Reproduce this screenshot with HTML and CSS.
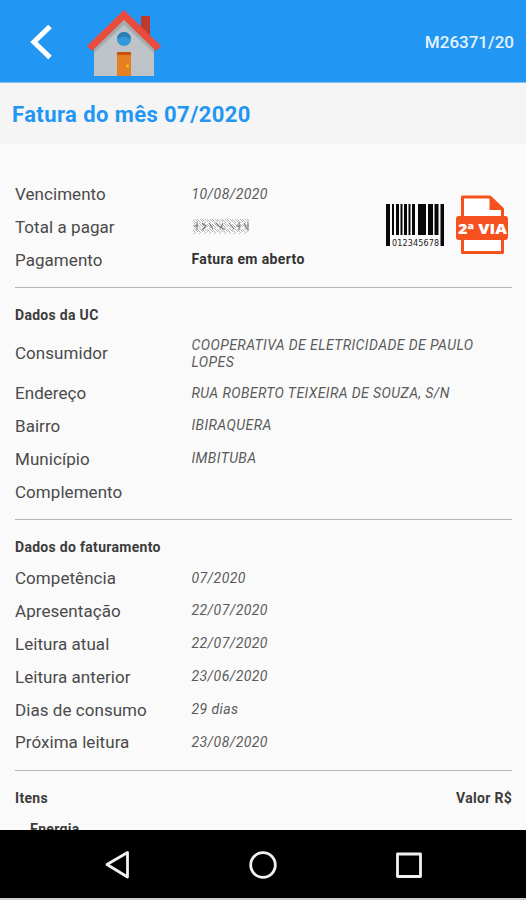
FILE: index.html
```html
<!DOCTYPE html>
<html lang="pt-BR">
<head>
<meta charset="utf-8">
<title>Fatura</title>
<link rel="stylesheet" href="styles.css">
</head>
<body>
<div class="app">
  <header class="topbar">
    <svg class="back" width="24" height="38" viewBox="0 0 24 38"><path d="M22 3.500L6 19L22 34.500" fill="none" stroke="#fff" stroke-width="5.200"/></svg>
    <svg class="house" width="76" height="70" viewBox="0 0 76 70">
      <path d="M55 8h9v26l-9-7z" fill="#c0392b"/>
      <path d="M38 10L68 38V68H8V38z" fill="#bdc3c7"/>
      <path d="M38 12L8 40v5L38 17l30 28v-5z" fill="#a3acb0"/>
      <path d="M38 2L1 38l5 5L38 12l32 31l5-5z" fill="#e74c3c"/>
      <circle cx="38" cy="31" r="7" fill="#3498db"/>
      <path d="M31 31a7 7 0 0 1 14 0q-7-5-14 0z" fill="#2980b9"/>
      <path d="M31 44h14v24H31z" fill="#e67e22"/>
      <path d="M31 44h14v3H31z" fill="#c9510c"/>
      <circle cx="41.500" cy="58" r="1.700" fill="#f1b50f"/>
    </svg>
    <span class="code">M26371/20</span>
  </header>
  <h1 class="title">Fatura do mês 07/2020</h1>
  <main class="content">
    <section class="summary">
      <dl class="rows">
        <div class="row"><dt>Vencimento</dt><dd>10/08/2020</dd></div>
        <div class="row"><dt>Total a pagar</dt><dd>
          <svg class="masked" width="59" height="18" viewBox="0 0 59 18">
            <defs><pattern id="hatch" width="5" height="5" patternUnits="userSpaceOnUse"><path d="M0 1L4 5M2 0L5 3M0 4L2 2" stroke="#aaa" stroke-width=".8" fill="none"/></pattern></defs>
            <path d="M1 1h56v15H1z" fill="url(#hatch)"/>
            <path d="M2 8h4M5 4v8M10 5l4 3l-4 4M17 5l4 6M24 5l5 5M31 5q-4 6 2 6M37 5l5 6M44 8h5M47 4v8M52 5l3 6M56 4v8" fill="none" stroke="#777" stroke-width="1.100"/>
          </svg></dd></div>
        <div class="row"><dt>Pagamento</dt><dd class="status">Fatura em aberto</dd></div>
      </dl>
      <div class="actions">
        <svg width="59" height="46" viewBox="0 0 59 46">
          <path d="M0 2h4v42H0zM6 2h2v31H6zM10 2h3v31h-3zM14.500 2h2v31h-2zM18 2h3v31h-3zM22.500 2h2v31h-2zM26 2h3v31h-3zM32 2h8v31h-8zM42 2h5v31h-5zM48.500 2h4v31h-4zM54.500 2h3.500v42h-3.500z" fill="#080808"/>
          <text class="digits" x="6" y="43.500" textLength="47">012345678</text>
        </svg>
        <svg width="54" height="60" viewBox="0 0 54 60">
          <path d="M6.500 2H34L46.500 14V57.500H6.500z" fill="#fff" stroke="#f4511e" stroke-width="3" stroke-linejoin="round"/>
          <path d="M33.500 1L47.500 15H33.500z" fill="#f4511e"/>
          <rect x="0" y="21" width="52" height="24" rx="3" fill="#f4511e"/>
          <text class="via" x="2" y="38.500" textLength="49" lengthAdjust="spacingAndGlyphs">2ª VIA</text>
        </svg>
      </div>
    </section>
    <section class="block uc">
      <h2>Dados da UC</h2>
      <dl class="rows">
        <div class="row tall"><dt>Consumidor</dt><dd class="name">COOPERATIVA DE ELETRICIDADE DE PAULO LOPES</dd></div>
        <div class="row"><dt>Endereço</dt><dd>RUA ROBERTO TEIXEIRA DE SOUZA, S/N</dd></div>
        <div class="row"><dt>Bairro</dt><dd>IBIRAQUERA</dd></div>
        <div class="row"><dt>Município</dt><dd>IMBITUBA</dd></div>
        <div class="row"><dt>Complemento</dt><dd></dd></div>
      </dl>
    </section>
    <section class="block billing">
      <h2>Dados do faturamento</h2>
      <dl class="rows">
        <div class="row"><dt>Competência</dt><dd>07/2020</dd></div>
        <div class="row"><dt>Apresentação</dt><dd>22/07/2020</dd></div>
        <div class="row"><dt>Leitura atual</dt><dd>22/07/2020</dd></div>
        <div class="row"><dt>Leitura anterior</dt><dd>23/06/2020</dd></div>
        <div class="row"><dt>Dias de consumo</dt><dd>29 dias</dd></div>
        <div class="row"><dt>Próxima leitura</dt><dd>23/08/2020</dd></div>
      </dl>
    </section>
    <section class="block items">
      <div class="items-head"><h2>Itens</h2><h2>Valor R$</h2></div>
      <h2 class="item">Energia</h2>
    </section>
  </main>
  <nav class="navbar">
    <svg width="526" height="68" viewBox="0 0 526 68" fill="none" stroke="#f2f2f2" stroke-width="2.800" stroke-linejoin="round">
      <path d="M107 34.500L127.500 22.500V47z"/>
      <circle cx="263" cy="35" r="12.300"/>
      <rect x="397.500" y="24" width="23" height="22.500"/>
    </svg>
  </nav>
</div>
</body>
</html>
```
FILE: styles.css
```css
* { box-sizing: border-box; }
body {
  margin: 0;
  background: #fafafa;
  color: #4a4a4a;
  font-family: Roboto, "Liberation Sans", sans-serif;
}
h1, h2, dl, dt, dd { margin: 0; }
.app {
  width: 526px;
  height: 900px;
  display: flex;
  flex-direction: column;
  overflow: hidden;
}
.topbar {
  flex: none;
  height: 83px;
  padding: 2px 12px 0 28px;
  display: flex;
  align-items: center;
  background: #2196f3;
  border-bottom: 1px solid #7fc0f5;
}
.back { display: block; }
.house { display: block; margin: 1px 0 0 34px; }
.code {
  margin-left: auto;
  color: #e6f3ff;
  font-size: 17px;
  font-weight: 500;
}
.title {
  flex: none;
  height: 61px;
  padding: 0 12px;
  background: #f5f5f5;
  color: #2196f3;
  font-size: 22px;
  font-weight: 700;
  line-height: 63px;
  letter-spacing: 0.42px;
}
.content {
  flex: 1;
  min-height: 0;
  overflow: hidden;
  padding: 34px 14px 0 15px;
}
.summary {
  position: relative;
  height: 109px;
}
.actions {
  position: absolute;
  top: 17px;
  right: 2.500px;
  display: flex;
  align-items: center;
  gap: 10.500px;
}
.row {
  display: flex;
  align-items: center;
  height: 32.800px;
}
.row.tall { height: 47px; }
.tall dt { margin-top: -2px; }
dt {
  flex: none;
  width: 176.500px;
  font-size: 17px;
  letter-spacing: 0.05px;
}
dd {
  font-size: 14px;
  font-style: italic;
  line-height: 17.500px;
  letter-spacing: 0.41px;
  color: #5a5a5a;
}
.name { width: 300px; padding-top: 1px; }
.status {
  font-weight: 700;
  font-style: normal;
  letter-spacing: 0.36px;
  color: #333;
}
.masked { display: block; }
.block { border-top: 1.500px solid #b5b5b5; }
h2 {
  font-size: 14px;
  line-height: 18px;
  font-weight: 700;
  letter-spacing: 0.3px;
  color: #3c3c3c;
}
.uc { height: 232px; padding-top: 18px; }
.uc .rows { padding-top: 6px; }
.billing { height: 251px; padding-top: 18px; }
.billing .rows { padding-top: 6px; }
.items { padding-top: 18px; }
.items-head { display: flex; justify-content: space-between; }
.item { margin: 12.500px 0 0 15px; }
.digits {
  font-family: "DejaVu Sans", sans-serif;
  font-size: 8px;
  fill: #222;
}
.via {
  font-family: "Open Sans", sans-serif;
  font-size: 14px;
  font-weight: 800;
  fill: #fff;
}
.navbar {
  flex: none;
  height: 70px;
  background: #000;
  border-bottom: 2px solid #d0d0d0;
}
.navbar svg { display: block; }
```
